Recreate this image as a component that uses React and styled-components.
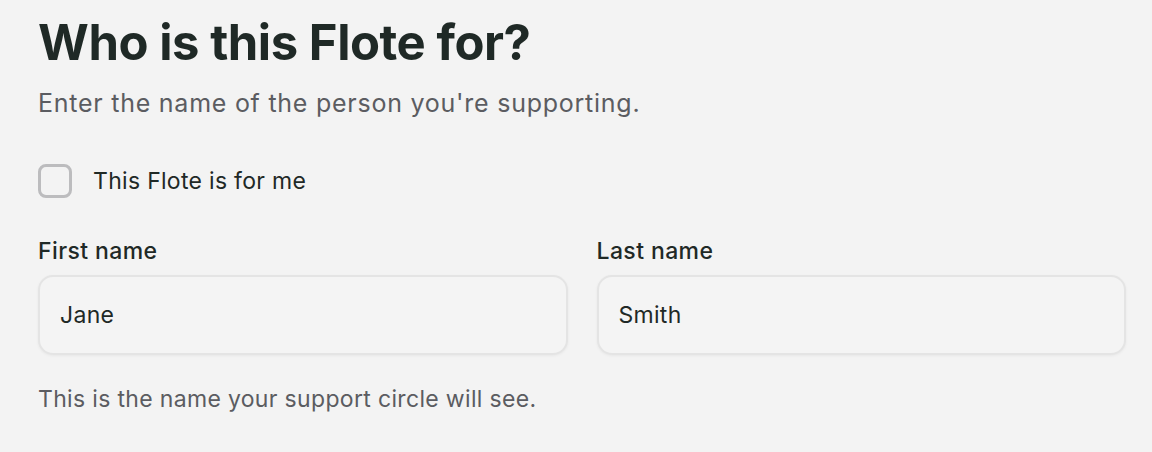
import styled, { createGlobalStyle } from "styled-components";

const GlobalStyle = createGlobalStyle`
  body {
    margin: 0;
    background: #f3f3f3;
    font-family: Inter, "Noto Sans", sans-serif;
    color: #1f2926;
  }
`;

const Page = styled.div`
  padding: 12px 26px 0 38px;
`;

const Title = styled.h1`
  margin: 0;
  font-size: 49px;
  font-weight: 700;
  line-height: 62px;
  letter-spacing: -0.45px;
`;

const Subtitle = styled.p`
  margin: 14px 0 0;
  font-size: 25px;
  line-height: 30px;
  letter-spacing: 0.75px;
  color: #5b5c61;
`;

const CheckRow = styled.label`
  display: flex;
  align-items: center;
  gap: 21px;
  margin-top: 46px;
  font-size: 23px;
  line-height: 28px;
  letter-spacing: 0.3px;
  cursor: pointer;
`;

const Box = styled.input.attrs({ type: "checkbox" })`
  appearance: none;
  margin: 0;
  width: 34px;
  height: 34px;
  border: 3px solid #bcbcbe;
  border-radius: 8px;
  background: transparent;
`;

const Fields = styled.div`
  display: grid;
  grid-template-columns: 1fr 1fr;
  gap: 29px;
  margin-top: 39px;
`;

const Field = styled.div`
  display: flex;
  flex-direction: column;
  gap: 10px;
`;

const Label = styled.span`
  font-size: 23px;
  font-weight: 500;
  line-height: 28px;
  letter-spacing: 0.4px;
`;

const Input = styled.input`
  box-sizing: border-box;
  height: 80px;
  padding: 0 20px;
  border: 2px solid #e4e4e4;
  border-radius: 15px;
  background: #f4f4f4;
  box-shadow: 0 1px 3px rgba(0, 0, 0, 0.05);
  font-family: inherit;
  font-size: 23px;
  letter-spacing: 0.3px;
  color: #1f2926;
  outline: none;
`;

const Help = styled.p`
  margin: 30px 0 0;
  font-size: 23px;
  line-height: 28px;
  letter-spacing: 0.33px;
  color: #5b5c61;
`;

export default function App() {
  return (
    <>
      <GlobalStyle />
      <Page>
        <Title>Who is this Flote for?</Title>
        <Subtitle>Enter the name of the person you're supporting.</Subtitle>
        <CheckRow>
          <Box />
          This Flote is for me
        </CheckRow>
        <Fields>
          <Field>
            <Label>First name</Label>
            <Input defaultValue="Jane" />
          </Field>
          <Field>
            <Label>Last name</Label>
            <Input defaultValue="Smith" />
          </Field>
        </Fields>
        <Help>This is the name your support circle will see.</Help>
      </Page>
    </>
  );
}
